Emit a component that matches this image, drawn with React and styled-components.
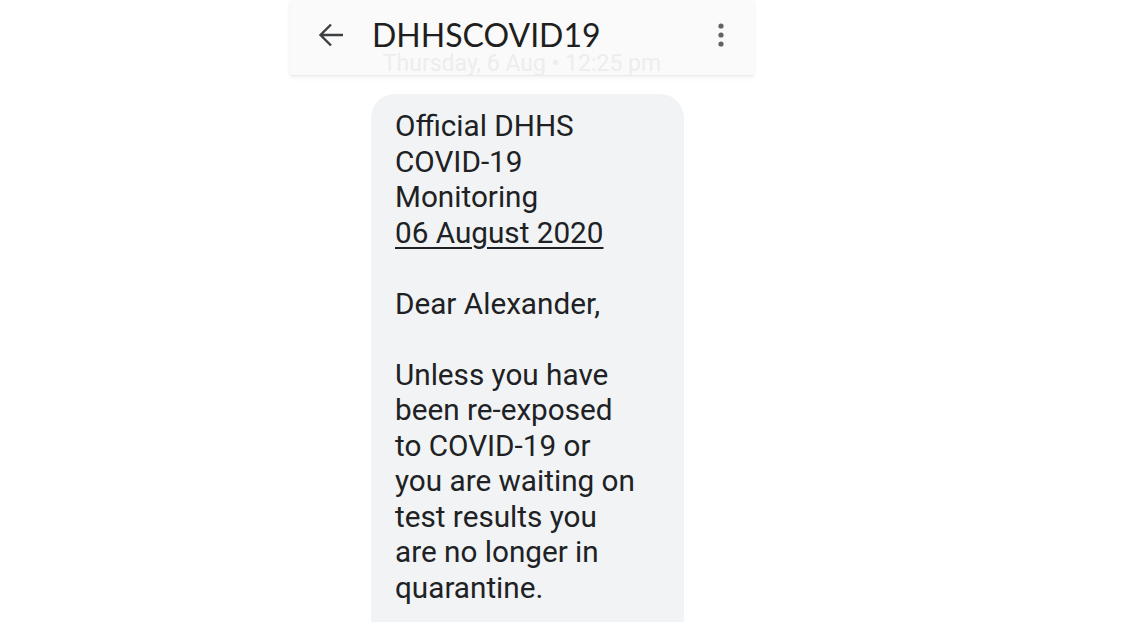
import React from "react";
import styled, { createGlobalStyle } from "styled-components";

const GlobalStyle = createGlobalStyle`
  html, body {
    margin: 0;
    padding: 0;
    background: #ffffff;
  }
  body {
    font-family: Roboto, "Liberation Sans", sans-serif;
    overflow: hidden;
  }
`;

const Page = styled.div`
  width: 1121px;
  height: 622px;
  overflow: hidden;
  display: flex;
  padding-left: 290px;
  box-sizing: border-box;
`;

const Screen = styled.div`
  width: 464px;
  display: flex;
  flex-direction: column;
`;

const Header = styled.header`
  height: 75px;
  flex-shrink: 0;
  background: #fafafa;
  box-shadow: 0 1px 2px rgba(0, 0, 0, 0.07), 0 3px 6px rgba(0, 0, 0, 0.04);
  overflow: hidden;
  display: flex;
  flex-direction: column;
  z-index: 1;
`;

const TopRow = styled.div`
  height: 70px;
  flex-shrink: 0;
  display: flex;
  align-items: center;
  padding: 0 27px 0 27px;
  box-sizing: border-box;
`;

const IconButton = styled.div`
  width: ${(p) => p.$w || 28}px;
  height: 28px;
  display: flex;
  align-items: center;
  justify-content: center;
  color: #3c4043;
`;

const Title = styled.h1`
  margin: 0 0 0 27px;
  flex: 1;
  font-family: Lato, "Open Sans", sans-serif;
  font-weight: 400;
  font-size: 32px;
  line-height: 32px;
  color: #1f1f1f;
`;

const Stamp = styled.div`
  margin-top: -16px;
  text-align: center;
  font-size: 23px;
  color: #ededed;
  line-height: 20px;
`;

const Thread = styled.div`
  padding: 19px 0 0 81px;
`;

const Bubble = styled.div`
  width: 313px;
  box-sizing: border-box;
  background: #f1f3f4;
  border-radius: 24px;
  padding: 14px 20px 20px 24px;
  font-size: 29.7px;
  line-height: 35.5px;
  color: #202124;
`;

const Para = styled.p`
  margin: 0 0 35.5px 0;
`;

const Line = styled.span`
  display: block;
  white-space: nowrap;
  text-decoration: ${(p) => (p.$underline ? "underline" : "none")};
  text-underline-offset: 4px;
  text-decoration-thickness: 1.5px;
`;

const BackArrow = () => (
  <svg width="26" height="24" viewBox="0 0 26 24" fill="none">
    <path
      d="M25 12H2.5M13 1.5L2.5 12L13 22.5"
      stroke="currentColor"
      strokeWidth="2.4"
    />
  </svg>
);

const MoreDots = () => (
  <svg width="8" height="26" viewBox="0 0 8 26">
    <circle cx="4" cy="4" r="2.6" fill="#5f6368" />
    <circle cx="4" cy="13" r="2.6" fill="#5f6368" />
    <circle cx="4" cy="22" r="2.6" fill="#5f6368" />
  </svg>
);

const message = [
  { lines: ["Official DHHS", "COVID-19", "Monitoring"], date: "06 August 2020" },
  { lines: ["Dear Alexander,"] },
  {
    lines: [
      "Unless you have",
      "been re-exposed",
      "to COVID-19 or",
      "you are waiting on",
      "test results you",
      "are no longer in",
      "quarantine.",
    ],
  },
];

const App = () => {
  return (
    <>
      <GlobalStyle />
      <Page>
        <Screen>
          <Header>
            <TopRow>
              <IconButton>
                <BackArrow />
              </IconButton>
              <Title>DHHSCOVID19</Title>
              <IconButton $w={12}>
                <MoreDots />
              </IconButton>
            </TopRow>
            <Stamp>Thursday, 6 Aug • 12:25 pm</Stamp>
          </Header>
          <Thread>
            <Bubble>
              {message.map((para, i) => (
                <Para key={i}>
                  {para.lines.map((l) => (
                    <Line key={l}>{l}</Line>
                  ))}
                  {para.date && <Line $underline>{para.date}</Line>}
                </Para>
              ))}
            </Bubble>
          </Thread>
        </Screen>
      </Page>
    </>
  );
};

export default App;
